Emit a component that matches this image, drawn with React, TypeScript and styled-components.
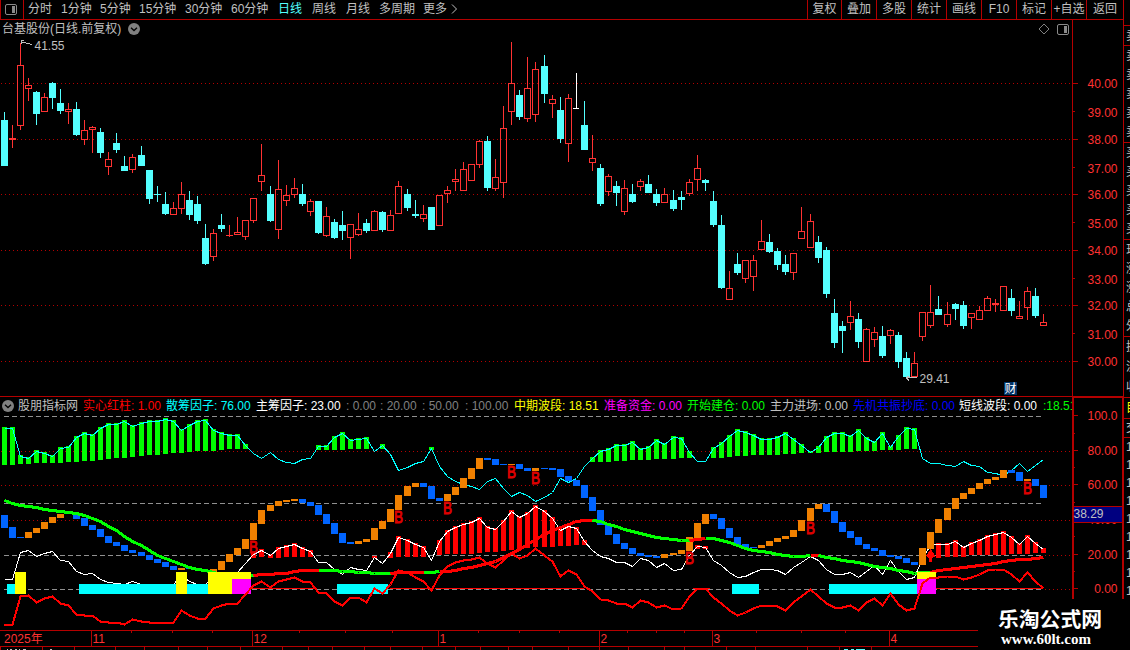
import React from 'react';
import styled, { createGlobalStyle } from 'styled-components';

const GlobalStyle = createGlobalStyle`
  body {
    margin: 0;
    background: #000;
    overflow: hidden;
  }
`;

const LINE = '#b40000';
const TEXT = '#c0c0c0';
const UP = '#ff3232';
const DOWN = '#54ffff';
const FONT = "'Liberation Sans', 'Noto Sans CJK SC', sans-serif";

const Screen = styled.div`
  position: relative;
  display: flex;
  width: 1130px;
  height: 650px;
  overflow: hidden;
  background: #000;
  color: ${TEXT};
  font: 12px/18px ${FONT};
  white-space: nowrap;

  svg {
    display: block;
    flex: none;
  }
`;

const Main = styled.main`
  display: flex;
  flex-direction: column;
  flex: none;
  width: 1123px;
`;

const Toolbar = styled.header`
  display: flex;
  flex: none;
  box-sizing: border-box;
  height: 20px;
  border-bottom: 1px solid ${LINE};
  border-left: 1px solid ${LINE};
  line-height: 19px;
`;

const LayoutButton = styled.button`
  display: flex;
  align-items: center;
  box-sizing: border-box;
  width: 23px;
  margin: 0 4px 0 0;
  padding: 0 0 1px 4px;
  background: none;
  border: 0;
  border-right: 1px solid ${LINE};
`;

const PeriodTab = styled.span<{ $w: number; $active?: boolean }>`
  width: ${({ $w }) => $w}px;
  color: ${({ $active }) => ($active ? '#54ffff' : TEXT)};
`;

const Tools = styled.div`
  display: flex;
  margin-left: auto;
`;

const Tool = styled.span<{ $w: number }>`
  box-sizing: border-box;
  width: ${({ $w }) => $w}px;
  border-left: 1px solid ${LINE};
  text-align: center;
`;

const Pane = styled.section<{ $height: number }>`
  display: flex;
  flex: none;
  height: ${({ $height }) => $height}px;
`;

const Plot = styled.div`
  display: flex;
  flex-direction: column;
  width: 1072px;
`;

const PriceHeader = styled.div`
  display: flex;
  align-items: center;
  gap: 7px;
  height: 18px;
  padding: 0 3px 0 2px;
`;

const HeaderIcons = styled.div`
  display: flex;
  align-items: center;
  gap: 7px;
  margin-left: auto;
`;

const Legend = styled.div`
  display: flex;
  align-items: center;
  height: 18px;
  padding-left: 2px;
  overflow: hidden;
  border-top: 1px solid ${LINE};
`;

const LegendTitle = styled.span`
  flex: none;
  width: 65px;
  margin-left: 4px;
`;

const LegendItem = styled.span<{ $w: number; $color: string }>`
  flex: none;
  width: ${({ $w }) => $w}px;
  color: ${({ $color }) => $color};
`;

const TimeAxis = styled.footer`
  height: 20px;
`;

const Side = styled.aside`
  display: flex;
  flex-direction: column;
  width: 7px;
  flex: none;
  overflow: hidden;
`;

const SideGroup = styled.div<{ $height: number; $color?: string; $last?: boolean }>`
  display: flex;
  flex-direction: column;
  justify-content: space-around;
  flex: none;
  box-sizing: border-box;
  height: ${({ $height }) => $height}px;
  padding-left: 2px;
  border-left: ${({ $last }) => ($last ? '1px solid transparent' : `1px solid ${LINE}`)};
  border-bottom: ${({ $last }) => ($last ? 'none' : `1px solid ${LINE}`)};
  color: ${({ $color }) => $color ?? TEXT};
`;

const Watermark = styled.div`
  position: absolute;
  right: 0;
  bottom: 0;
  display: flex;
  flex-direction: column;
  box-sizing: border-box;
  width: 152px;
  height: 50px;
  padding: 7px 0 0 20px;
  background: #000;
  color: #fff;
`;

const SiteName = styled.strong`
  font: bold 20.8px/22px 'Noto Sans CJK SC', sans-serif;
`;

const SiteUrl = styled.strong`
  padding: 1px 0 0 3px;
  font: bold 15px/18px 'Liberation Serif', serif;
`;

const periods: [string, number][] = [
  ['分时', 33], ['1分钟', 39], ['5分钟', 39], ['15分钟', 46], ['30分钟', 46], ['60分钟', 47],
  ['日线', 34], ['周线', 34], ['月线', 33], ['多周期', 44], ['更多', 28],
];

const tools: [string, number][] = [
  ['复权', 34], ['叠加', 35], ['多股', 35], ['统计', 35], ['画线', 35], ['F10', 35],
  ['标记', 35], ['+自选', 35], ['返回', 37],
];

const legend: [string, number, string][] = [
  ['实心红柱: 1.00', 83, '#ff0000'],
  ['散筹因子: 76.00', 90, '#00ffff'],
  ['主筹因子: 23.00', 90, '#ffffff'],
  [': 0.00', 34, '#808080'],
  [': 20.00', 42, '#808080'],
  [': 50.00', 43, '#808080'],
  [': 100.00', 49, '#808080'],
  ['中期波段: 18.51', 90, '#ffff00'],
  ['准备资金: 0.00', 83, '#ff00ff'],
  ['开始建仓: 0.00', 83, '#00ff00'],
  ['主力进场: 0.00', 83, TEXT],
  ['先机共振抄底: 0.00', 106, '#0000ff'],
  ['短线波段: 0.00', 84, '#ffffff'],
  [':18.51', 40, '#00ff00'],
];

// kind (u = up, d = down, w = flat), high, body top, body bottom, low
const candleData = `
d112,120,166,166 u125,138,140,148 u43,65,126,130 u78,85,89,101 d91,92,114,125 u93,97,112,112 d82,83,98,109 d89,103,111,114
u103,109,112,124 d102,109,135,136 u120,130,140,145 u126,127,130,153 d128,132,153,158 u152,159,167,175 d133,143,150,153 d156,166,171,171
u154,157,170,173 d146,155,166,166 d170,170,199,204 d186,194,195,202 d192,204,214,215 u202,208,215,215 u182,194,209,214 d191,200,215,220
d196,204,221,224 d224,238,264,265 u229,233,257,261 d214,225,229,232 u225,235,236,237 u217,232,235,235 u220,220,237,240 u198,198,221,223
u144,175,182,191 d186,194,221,222 u160,189,230,239 u185,195,201,206 u178,188,195,198 d184,194,204,206 u199,201,212,216 d201,201,233,234
u207,216,236,237 d219,222,238,239 d211,225,231,240 u224,224,238,259 u213,229,235,236 d219,223,231,233 u210,211,231,231 d211,212,230,232
u210,215,231,231 u181,186,214,214 d189,194,208,211 d200,214,216,218 u205,214,219,222 d207,207,230,230 u195,195,226,226 u186,190,194,203
u169,179,182,191 u162,169,191,191 u164,164,181,181 u140,141,165,168 d136,141,188,191 u159,177,189,191 u106,128,183,198 u42,83,112,125
d90,95,117,120 u57,88,119,122 u62,69,115,122 d55,66,94,103 u95,99,104,118 d97,110,139,143 u94,98,144,162 w73,108,109,109
d101,125,150,150 u135,158,163,171 d164,168,204,206 u174,176,192,196 d181,186,193,206 u180,188,212,215 d184,194,202,203 u179,181,187,191
d175,184,193,193 d189,194,203,206 u188,194,203,203 d190,200,209,211 d191,197,200,210 u179,182,194,196 u155,168,180,191 d179,180,183,191
d191,201,225,227 d215,225,288,289 u271,288,300,300 d253,264,273,275 u260,260,279,283 u255,260,277,291 u220,241,250,250 d234,242,252,253
d248,251,265,270 d255,264,272,275 u253,253,273,280 u207,231,239,239 u214,221,248,248 d236,242,258,263 d247,250,294,298 d299,313,343,348
d321,326,331,353 u301,316,323,330 d313,319,342,348 u328,329,362,362 u327,332,340,347 d326,336,356,358 u329,330,336,344 d332,335,362,368
d352,358,377,378 u352,363,377,377 u312,312,337,341 u285,312,326,328 d296,309,315,315 u302,314,325,327 d303,304,309,320 d301,305,326,329
u313,313,318,329 u306,310,320,320 u296,298,311,311 u299,303,305,312 u286,286,311,311 d289,298,311,316 u301,316,319,319 u287,291,308,320
d288,296,316,318 u314,322,326,326`;

// trend blocks: o = rising, b = falling, then top and bottom
const blockData = `
b515,528 b527,538 b537,538 o532,538 o528,533 o522,529 o517,523 o514,518 o513,514 b514,519 b518,526 b525,530 b529,537
b536,543 b542,546 b545,551 b550,553 b552,556 b555,560 b559,563 b562,567 b566,570 o568,570 b568,569 b568,570 b570,572
o569,572 o561,570 o554,562 o548,555 o539,549 o523,540 o510,524 o505,511 o501,506 o500,502 o499,501 b499,503 b502,506
b505,515 b514,524 b523,534 b533,543 b542,544 o541,544 o539,542 o528,540 o521,529 o509,522 o495,510 o486,496 o483,487
b483,487 b486,499 b498,501 o494,501 o487,495 o478,488 o468,479 o458,469 b458,460 b459,465 b464,465 o464,465 b464,469
b468,471 o468,471 b468,469 b468,470 b469,477 b476,481 b480,486 b485,498 b497,511 b510,525 b524,535 b534,544 b543,549
b548,554 b553,556 b555,557 b556,558 o554,558 o553,555 o550,554 o537,551 o523,538 o514,524 b514,519 b518,529 b528,538
b537,545 b544,548 b547,548 o545,548 o541,546 o538,542 o536,539 o530,537 o520,531 o508,521 o504,509 b504,512 b511,523
b522,532 b531,538 b537,545 b544,549 b548,551 b550,556 b555,557 b556,559 b558,563 b562,565 o548,565 o532,549 o519,533
o508,520 o498,509 o493,499 o488,494 o483,489 o479,484 o477,480 o470,478 b470,473 b472,481 o479,481 b479,486 b485,498`;

const retail = [
  428, 428, 456, 458, 451, 453, 456, 448, 447, 437, 433, 435, 428, 424, 424, 421, 426, 423, 421, 421, 419, 421, 430, 425, 421, 420,
  430, 433, 435, 435, 445, 453, 458, 452, 459, 462, 463, 459, 458, 446, 446, 437, 433, 440, 439, 438, 451, 445, 454, 470, 467, 463,
  461, 448, 466, 476, 481, 484, 486, 489, 481, 478, 488, 496, 492, 495, 501, 497, 492, 478, 482, 478, 466, 458, 451, 449, 445, 445,
  442, 449, 447, 440, 444, 437, 438, 452, 461, 461, 448, 443, 436, 430, 432, 435, 439, 439, 437, 433, 439, 445, 452, 447, 437, 433,
  433, 436, 430, 438, 442, 433, 447, 436, 428, 429, 458, 463, 463, 465, 466, 461, 465, 466, 472, 473, 475, 470, 463, 471, 465, 459,
];

const mainForce = [
  579, 579, 552, 550, 556, 553, 551, 560, 561, 571, 574, 573, 579, 582, 583, 584, 581, 584, 584, 584, 584, 584, 575, 581, 584, 584,
  577, 577, 574, 572, 563, 554, 550, 555, 548, 546, 544, 548, 551, 562, 562, 569, 574, 567, 569, 570, 557, 563, 553, 537, 540, 544,
  547, 560, 541, 531, 527, 524, 522, 518, 527, 529, 521, 511, 517, 513, 506, 511, 518, 530, 526, 528, 541, 550, 556, 558, 562, 562,
  566, 558, 560, 567, 563, 570, 569, 555, 546, 547, 560, 565, 572, 577, 576, 572, 569, 569, 570, 574, 567, 562, 556, 560, 569, 574,
  574, 572, 577, 571, 565, 574, 560, 571, 579, 577, 558, 545, 544, 544, 541, 547, 543, 540, 536, 534, 532, 537, 544, 536, 543, 549,
];

const shortWave = [
  625, 624, 596, 595, 602, 598, 596, 603, 605, 614, 615, 615, 621, 622, 622, 624, 619, 621, 622, 622, 622, 622, 610, 615, 618, 618,
  608, 605, 603, 603, 594, 585, 581, 587, 581, 579, 577, 581, 582, 592, 593, 601, 605, 597, 597, 602, 588, 593, 584, 570, 572, 577,
  581, 590, 575, 566, 562, 560, 559, 557, 563, 567, 560, 553, 558, 555, 548, 555, 561, 576, 570, 574, 586, 591, 599, 600, 603, 603,
  607, 600, 602, 607, 605, 609, 608, 596, 588, 588, 597, 603, 610, 615, 612, 608, 605, 605, 606, 610, 602, 596, 589, 596, 603, 607,
  607, 605, 610, 602, 598, 605, 593, 604, 610, 608, 583, 577, 577, 576, 576, 579, 577, 574, 570, 569, 569, 574, 581, 572, 581, 588,
];

const midWave = [
  500, 503, 505, 506, 507, 509, 510, 511, 512, 513, 515, 518, 521, 526, 530, 536, 541, 545, 550, 555, 558, 561, 564, 567, 569, 570,
  572, 574, 575, 575, 575, 575, 574, 574, 573, 573, 571, 570, 570, 570, 570, 570, 571, 571, 572, 572, 573, 573, 573, 572, 572, 572,
  572, 572, 571, 571, 570, 568, 567, 565, 563, 561, 557, 553, 549, 544, 539, 534, 530, 527, 524, 521, 520, 520, 521, 524, 526, 529,
  531, 533, 535, 537, 538, 539, 540, 540, 539, 538, 538, 540, 542, 545, 548, 550, 551, 552, 554, 555, 556, 556, 555, 555, 557, 558,
  560, 561, 562, 564, 566, 567, 568, 570, 571, 573, 572, 572, 570, 569, 568, 567, 566, 565, 564, 563, 561, 560, 559, 559, 558, 557,
];

// runs of histogram bars: first index, then the bottom of every bar
const greenRuns = [
  [0, 465, 465, 464, 464, 463, 463, 463, 463, 462, 462, 461, 461, 460, 459, 458, 458, 457, 456, 455, 455, 454, 453, 453, 452, 451, 451, 451, 450, 449, 449, 449],
  [39, 450, 450, 450, 450, 449, 449, 449],
  [47, 449],
  [53, 450],
  [73, 462, 462, 462, 461, 461, 460, 460, 460, 459, 459, 459, 458, 458],
  [88, 458, 458, 457, 456, 456, 455, 455, 455, 455, 454, 454, 453, 453, 453, 452, 452, 452, 452, 451, 451, 451, 450, 450, 450, 449, 449],
];

const redRuns = [
  [31, 558, 557, 558, 558, 557, 557, 557, 557],
  [46, 558],
  [48, 558, 557, 557, 557, 557],
  [54, 555, 554, 554, 554, 554, 553, 552, 552, 551, 550, 549, 548, 547, 547, 547, 546, 546, 545, 545],
  [86, 549, 549],
  [116, 558, 557, 557, 557, 555, 555, 555, 555, 555, 554, 554, 554, 553, 553],
];

const midRuns: [number, number, string][] = [
  [0, 31, '#00ff00'], [31, 39, '#ff0000'], [39, 48, '#00ff00'], [48, 52, '#ff0000'], [52, 54, '#00ff00'],
  [54, 73, '#ff0000'], [73, 85, '#00ff00'], [85, 87, '#ff0000'], [87, 100, '#00ff00'], [100, 101, '#ff0000'],
  [101, 115, '#00ff00'], [115, 129, '#ff0000'],
];

// x, y, width, colour of the blocks on the zero line (all end at 594)
const boxes: [number, number, number, string][] = [
  [7, 584, 8, '#00ffff'], [15, 572, 11, '#ffff00'], [79, 584, 97, '#00ffff'], [176, 572, 11, '#ffff00'],
  [187, 584, 21, '#00ffff'], [208, 572, 43, '#ffff00'], [232, 579, 19, '#ff00ff'], [337, 584, 51, '#00ffff'],
  [732, 584, 27, '#00ffff'], [829, 584, 88, '#00ffff'], [917, 572, 19, '#ffff00'], [917, 579, 19, '#ff00ff'],
];

const sellMarks = [
  [253, 553], [398, 523], [447, 514], [511, 478], [535, 484], [689, 564], [810, 534], [1027, 494],
];

const months: [number, string][] = [[91, '11'], [252, '12'], [438, '1'], [599, '2'], [712, '3'], [889, '4']];
const weekTicks = [131, 172, 212, 299, 345, 392, 478, 519, 559, 627, 656, 684, 756, 801, 845];
const bottomTicks = [
  0, 42, 74, 115, 144, 178, 207, 240, 282, 308, 332, 364, 390, 422, 455, 480, 508, 532, 568, 599, 628, 664,
  684, 726, 755, 807, 839, 871,
];

const colX = (i: number) => Math.floor(4.02 + i * 8.06);

const points = (series: number[], from = 0, to = series.length - 1) =>
  series
    .slice(from, to + 1)
    .map((y, k) => `${colX(from + k) + 0.5},${y + 0.5}`)
    .join(' ');

const parse = (data: string) =>
  data.trim().split(/\s+/).map((s) => ({ kind: s[0], v: s.slice(1).split(',').map(Number) }));

const candles = parse(candleData);
const blocks = parse(blockData);

function PanelIcon() {
  return (
    <svg width="12" height="11" viewBox="0 0 12 11">
      <rect x="0.5" y="0.5" width="11" height="10" rx="1.5" fill="none" stroke="#8a8a8a" />
      <rect x="7" y="2" width="3" height="7" fill="#8a8a8a" />
    </svg>
  );
}

function ChevronBadge() {
  return (
    <svg width="12" height="12" viewBox="0 0 12 12">
      <circle cx="6" cy="6" r="6" fill="#808080" />
      <path d="M3 4.8 6 7.6 9 4.8" fill="none" stroke="#000" strokeWidth="1.3" />
    </svg>
  );
}

function Candle({ kind, v, x }: { kind: string; v: number[]; x: number }) {
  const [high, top, bottom, low] = v;
  const color = kind === 'u' ? UP : kind === 'd' ? DOWN : '#ffffff';
  const hollow = kind === 'u' && bottom - top > 2;
  return (
    <g fill={color}>
      {high < top && <rect x={x} y={high} width="1" height={top - high} />}
      {low > bottom && <rect x={x} y={bottom} width="1" height={low - bottom} />}
      {hollow ? (
        <rect x={x - 2.5} y={top + 0.5} width="6" height={bottom - top - 1} fill="none" stroke={color} />
      ) : (
        <rect x={x - 3} y={top} width={kind === 'w' ? 6 : 7} height={bottom - top} />
      )}
    </g>
  );
}

function PriceChart() {
  return (
    <svg width="1072" height="358" viewBox="0 38 1072 358" shapeRendering="crispEdges">
      {[83, 139, 194, 250, 305, 361].map((y) => (
        <line key={y} x1="1" x2="1072" y1={y + 0.5} y2={y + 0.5} stroke={LINE} strokeDasharray="1 3" />
      ))}
      {candles.map((c, i) => (
        <Candle key={i} kind={c.kind} v={c.v} x={colX(i)} />
      ))}
      <path d="M21 42.5 25 42.5 27 43.5 29 43.5 32 45M21 44V40.5H24" fill="none" stroke={TEXT} />
      <text x="34.5" y="50" fill={TEXT}>41.55</text>
      <path d="M906 377.5H917M906 377.5 909 380.5M906 377.5 909 376" fill="none" stroke={TEXT} />
      <text x="919.5" y="383" fill={TEXT}>29.41</text>
      <rect x="1004" y="382" width="13" height="13" fill="#003366" />
      <text x="1004.5" y="393" fill="#fff">财</text>
    </svg>
  );
}

function PriceAxis() {
  const ticks = [83, 111, 139, 167, 194, 222, 250, 278, 305, 333, 361];
  return (
    <svg width="51" height="377" viewBox="1072 20 51 377" shapeRendering="crispEdges">
      <rect x="1072" y="20" width="1" height="376" fill={LINE} />
      <rect x="1072" y="396" width="51" height="1" fill={LINE} />
      {ticks.map((y, k) => (
        <g key={y}>
          <rect x="1073" y={y} width={k % 2 ? 2 : 5} height="1" fill={LINE} />
          <text x="1117.5" y={y + (k % 2 ? 6 : 5)} textAnchor="end" fill={UP}>
            {(40 - k).toFixed(2)}
          </text>
        </g>
      ))}
    </svg>
  );
}

function Histogram({ runs, tops, color }: { runs: number[][]; tops: number[]; color: string }) {
  return (
    <g fill={color}>
      {runs.map(([start, ...bottoms]) =>
        bottoms.map((bottom, k) => {
          const top = tops[start + k] - 1;
          return <rect key={start + k} x={colX(start + k) - 2} y={top} width="5" height={Math.max(2, bottom - top)} />;
        }),
      )}
    </g>
  );
}

function IndicatorChart() {
  return (
    <svg width="1072" height="215" viewBox="0 415 1072 215" shapeRendering="crispEdges">
      {[451, 485, 520, 555, 589].map((y) => (
        <line key={y} x1={y > 550 ? 1045 : 1} x2="1072" y1={y + 0.5} y2={y + 0.5} stroke={LINE} strokeDasharray="1 3" />
      ))}
      {[416, 503, 555, 589].map((y) => (
        <line key={y} x1="4" x2="1043" y1={y + 0.5} y2={y + 0.5} stroke="#909090" strokeDasharray="5 3" />
      ))}
      <Histogram runs={greenRuns} tops={retail} color="#00ff00" />
      <Histogram runs={redRuns} tops={mainForce} color="#ff0000" />
      <polyline points={points(retail)} fill="none" stroke="#00ffff" />
      <polyline points={points(mainForce)} fill="none" stroke="#ffffff" />
      {blocks.map(({ kind, v }, i) => (
        <rect key={i} x={colX(i) - 3} y={v[0]} width="7" height={v[1] - v[0]} fill={kind === 'o' ? '#f08000' : '#0064ff'} />
      ))}
      {midRuns.map(([from, to, color]) => (
        <polyline key={from} points={points(midWave, from, to)} fill="none" stroke={color} strokeWidth="3" />
      ))}
      {boxes.map(([x, y, w, color]) => (
        <rect key={`${x}-${y}`} x={x} y={y} width={w} height={594 - y} fill={color} />
      ))}
      <path d="M252 588.5H316M390 588.5H428M435 588.5H584M693 588.5H710M936 588.5H1043" stroke="#ff0000" />
      <polyline points={points(shortWave)} fill="none" stroke="#ff0000" strokeWidth="2" />
      <path d="M930.5 549 935.5 556 932 558V562H929V558L926 556Z" fill="#ff0000" />
      {sellMarks.map(([x, y]) => (
        <text
          key={x} x={x - 4} y={y} fontSize="17" textLength="9" lengthAdjust="spacingAndGlyphs"
          fill="#e00000" stroke="#e00000" strokeWidth="0.9"
        >
          B
        </text>
      ))}
    </svg>
  );
}

function IndicatorAxis() {
  const ticks: [number, string][] = [
    [416, '100.0'], [451, '80.00'], [485, '60.00'], [520, '40.00'], [555, '20.00'], [589, '0.00'],
  ];
  return (
    <svg width="52" height="233" viewBox="1072 397 52 233" shapeRendering="crispEdges">
      <path d="M1073 600V398H1123V600" fill="none" stroke={LINE} strokeWidth="2" />
      {ticks.map(([y, label]) => (
        <g key={y}>
          <rect x="1074" y={y} width="4" height="1" fill={LINE} />
          <text x="1117.5" y={y + 5} textAnchor="end" fill={UP}>{label}</text>
        </g>
      ))}
      {[434, 468, 503, 537, 572].map((y) => (
        <rect key={y} x="1074" y={y} width="1" height="1" fill={LINE} />
      ))}
      <rect x="1073.5" y="507.5" width="49" height="16" fill="#000080" stroke={LINE} />
      <text x="1073.5" y="519" fill={TEXT}>38.29</text>
    </svg>
  );
}

function TimeScale() {
  return (
    <svg width="978" height="20" viewBox="0 630 978 20" shapeRendering="crispEdges">
      <rect x="0" y="630" width="978" height="1" fill={LINE} />
      <rect x="0" y="646" width="978" height="1" fill={LINE} />
      {weekTicks.map((x) => <rect key={x} x={x} y="631" width="1" height="2" fill={LINE} />)}
      {bottomTicks.map((x) => <rect key={x} x={x} y="647" width="1" height="3" fill={LINE} />)}
      <text x="4" y="643" fill={UP}>2025年</text>
      {months.map(([x, label]) => (
        <g key={x}>
          <rect x={x} y="631" width="1" height="15" fill={LINE} />
          <text x={x + 1.5} y="643" fill={UP}>{label}</text>
        </g>
      ))}
      <path d="M7 649.5H8M10 649.5H12M15 649.5H17M19 649.5H20M23 649.5H26M50 649.5H52" stroke={TEXT} />
      <path d="M844 649.5H848M851 649.5H854M856 649.5H865" stroke={DOWN} />
    </svg>
  );
}

export default function App() {
  return (
    <Screen>
      <GlobalStyle />
      <Main>
        <Toolbar>
          <LayoutButton><PanelIcon /></LayoutButton>
          {periods.map(([label, w]) => (
            <PeriodTab key={label} $w={w} $active={label === '日线'}>{label}</PeriodTab>
          ))}
          <svg width="7" height="18" viewBox="0 0 7 18">
            <path d="M1 4.5 5.5 9 1 13.5" fill="none" stroke={TEXT} />
          </svg>
          <Tools>
            {tools.map(([label, w]) => <Tool key={label} $w={w}>{label}</Tool>)}
          </Tools>
        </Toolbar>

        <Pane $height={376}>
          <Plot>
            <PriceHeader>
              <span>台基股份(日线.前复权)</span>
              <ChevronBadge />
              <HeaderIcons>
                <svg width="12" height="12" viewBox="0 0 12 12">
                  <path d="M6 1 11 6 6 11 1 6Z" fill="none" stroke="#808080" />
                </svg>
                <PanelIcon />
              </HeaderIcons>
            </PriceHeader>
            <PriceChart />
          </Plot>
          <PriceAxis />
        </Pane>

        <Pane $height={234}>
          <Plot>
            <Legend>
              <ChevronBadge />
              <LegendTitle>股朋指标网</LegendTitle>
              {legend.map(([text, w, color], i) => (
                <LegendItem key={i} $w={w} $color={color}>{text}</LegendItem>
              ))}
            </Legend>
            <IndicatorChart />
          </Plot>
          <IndicatorAxis />
        </Pane>

        <TimeAxis><TimeScale /></TimeAxis>
      </Main>

      <Side>
        <SideGroup $height={26} />
        <SideGroup $height={20}><span>卖</span></SideGroup>
        <SideGroup $height={97}>
          {[5, 4, 3, 2, 1].map((n) => <span key={n}>卖</span>)}
        </SideGroup>
        <SideGroup $height={97}>
          {[1, 2, 3, 4, 5].map((n) => <span key={n}>买</span>)}
        </SideGroup>
        <SideGroup $height={97}>
          <span>现</span><span>涨</span><span>涨</span><span>总</span><span>外</span>
        </SideGroup>
        <SideGroup $height={61}>
          <span>换</span><span>流</span><span>收</span>
        </SideGroup>
        <SideGroup $height={21} $color="#ffff00"><span>目</span></SideGroup>
        <SideGroup $height={19}><span>交</span></SideGroup>
        <SideGroup $height={162} $last>
          {[0, 1, 2, 3, 4, 5, 6, 7, 8].map((n) => <span key={n}>1</span>)}
        </SideGroup>
      </Side>

      <Watermark>
        <SiteName>乐淘公式网</SiteName>
        <SiteUrl>www.60lt.com</SiteUrl>
      </Watermark>
    </Screen>
  );
}
